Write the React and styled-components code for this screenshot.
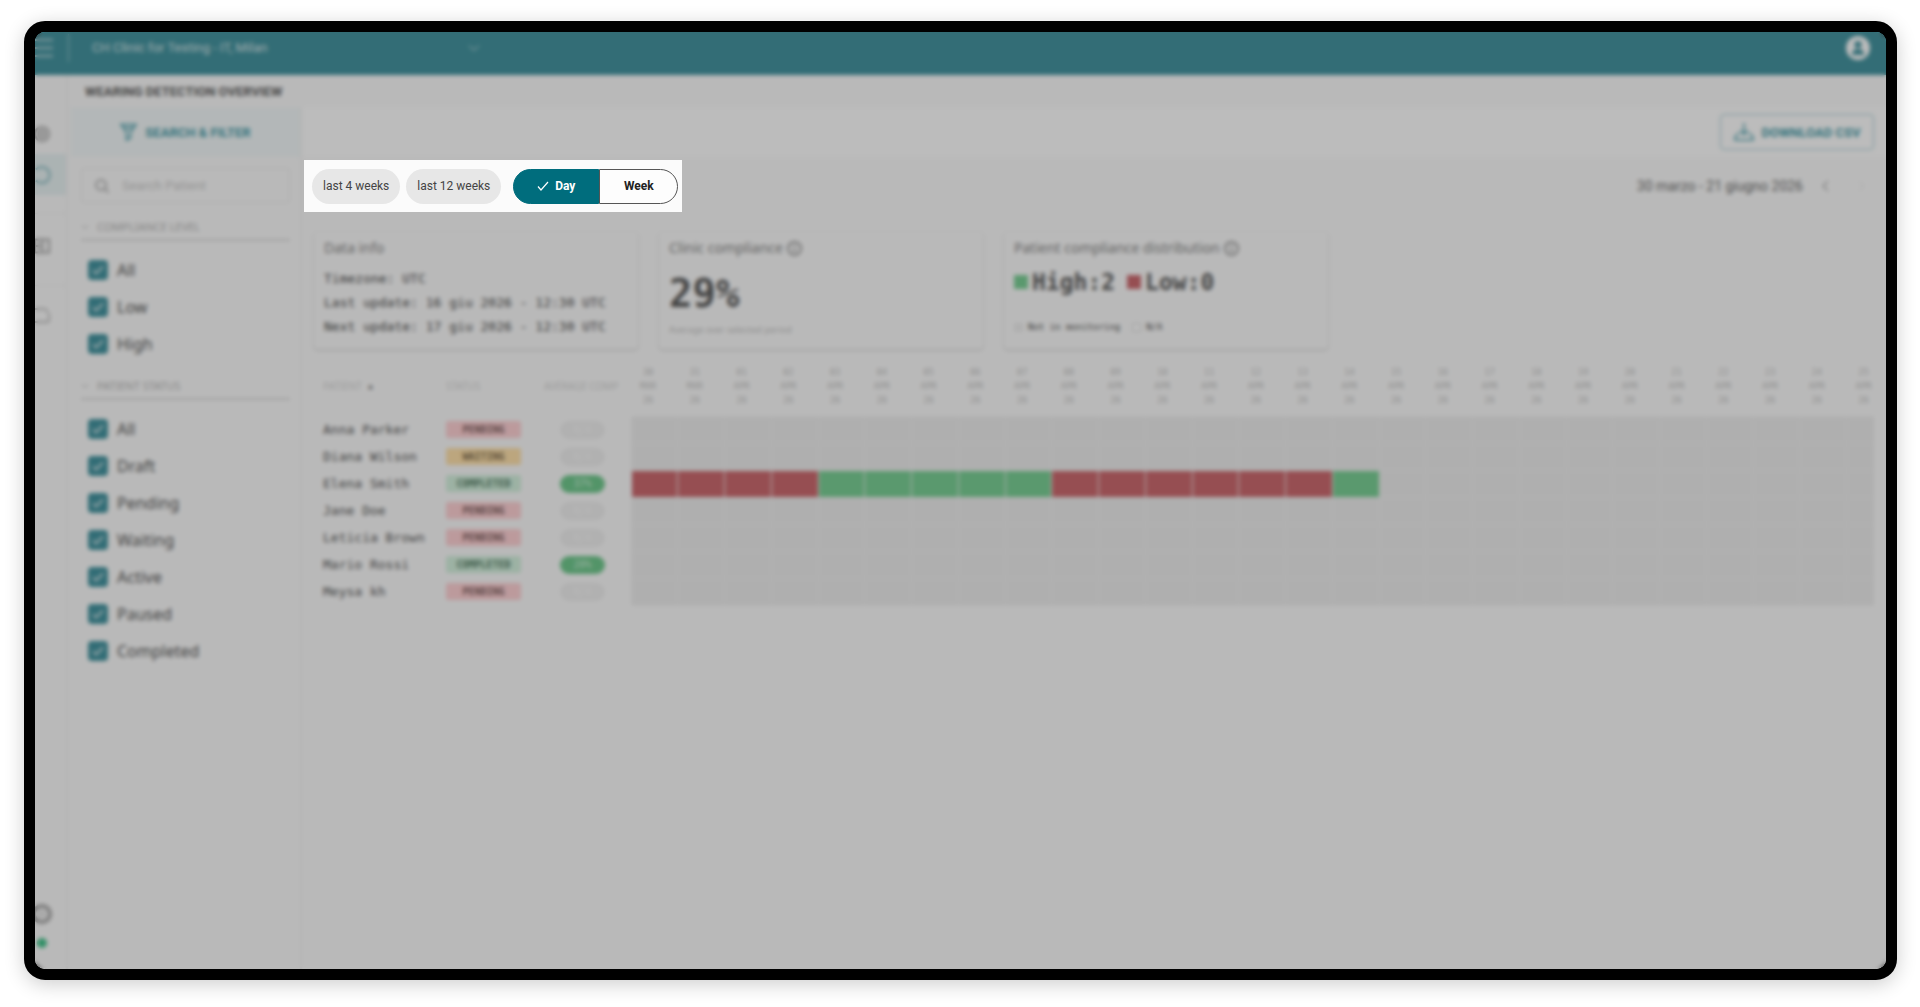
import React from "react";
import styled, { createGlobalStyle, css } from "styled-components";

const SANS = `Roboto, "Liberation Sans", sans-serif`;
const LABEL = `"Noto Sans", "Open Sans", sans-serif`;
const MONO = `"DejaVu Sans Mono", "Liberation Mono", monospace`;

const LEVELS = ["All", "Low", "High"];
const STATUSES = ["All", "Draft", "Pending", "Waiting", "Active", "Paused", "Completed"];

const ELENA = "LLLLHHHHHLLLLLLH";

const PATIENTS = [
  { name: "Anna Parker", status: "PENDING", rate: "N/A", days: "" },
  { name: "Diana Wilson", status: "WAITING", rate: "N/A", days: "" },
  { name: "Elena Smith", status: "COMPLETED", rate: "37%", days: ELENA },
  { name: "Jane Doe", status: "PENDING", rate: "N/A", days: "" },
  { name: "Leticia Brown", status: "PENDING", rate: "N/A", days: "" },
  { name: "Mario Rossi", status: "COMPLETED", rate: "20%", days: "" },
  { name: "Meysa kh", status: "PENDING", rate: "N/A", days: "" },
];

// 30 MAR, 31 MAR, 01 APR ... 25 APR
const DAYS = Array.from({ length: 27 }, (_, i) =>
  i < 2
    ? { day: String(30 + i), month: "MAR" }
    : { day: String(i - 1).padStart(2, "0"), month: "APR" }
);

function CheckRow({ name, label }) {
  return (
    <CheckLabel>
      <CheckBoxWrap>
        <CheckInput type="checkbox" name={name} defaultChecked />
        <svg width="14" height="14" viewBox="0 0 14 14" fill="none" stroke="#fff" strokeWidth="1.4">
          <path d="M2 7.5l3.2 3L12 3.5" />
        </svg>
      </CheckBoxWrap>
      {label}
    </CheckLabel>
  );
}

function FilterGroup({ title, name, options }) {
  return (
    <Group>
      <GroupTitle>
        <svg width="8" height="8" viewBox="0 0 8 8" fill="none" stroke="currentColor">
          <path d="M1 2.5l3 3 3-3" />
        </svg>
        {title}
      </GroupTitle>
      <GroupList>
        {options.map((o) => (
          <CheckRow key={o} name={name} label={o} />
        ))}
      </GroupList>
    </Group>
  );
}

function InfoIcon() {
  return (
    <svg width="15" height="15" viewBox="0 0 15 15" fill="none" stroke="currentColor" strokeWidth="1.5">
      <circle cx="7.5" cy="7.5" r="6.5" />
      <path d="M7.5 6.5v4.5M7.5 3.8v1.4" />
    </svg>
  );
}

export default function App() {
  return (
    <>
      <GlobalStyle />
      <Page>
        <Frame>
          <TopBar>
            <MenuButton aria-label="Menu">
              <svg width="18" height="20" viewBox="0 0 18 20" stroke="currentColor" strokeWidth="2">
                <path d="M0 2h18M0 10h18M0 18h18" />
              </svg>
            </MenuButton>
            <ClinicField>
              <ClinicSelect aria-label="Clinic" defaultValue="milan">
                <option value="milan">CH Clinic for Testing - IT, Milan</option>
              </ClinicSelect>
              <svg width="12" height="8" viewBox="0 0 12 8" fill="none" stroke="currentColor" strokeWidth="1">
                <path d="M1 1.5l5 5 5-5" />
              </svg>
            </ClinicField>
            <AvatarButton aria-label="Account">
              <svg width="24" height="24" viewBox="0 0 24 24">
                <circle cx="12" cy="12" r="12" fill="#fff" />
                <circle cx="12" cy="8.5" r="3.6" fill="#006d7d" />
                <path d="M6 19c0-4.5 2.5-6 6-6s6 1.5 6 6z" fill="#006d7d" />
              </svg>
            </AvatarButton>
          </TopBar>

          <Body>
            <Rail>
              <RailTop>
                <RailButton aria-label="Patients">
                  <svg width="18" height="18" viewBox="0 0 18 18" fill="none" stroke="currentColor" strokeWidth="2">
                    <circle cx="9" cy="9" r="7" />
                    <circle cx="9" cy="9" r="3" />
                  </svg>
                </RailButton>
                <RailButton aria-label="Wearing detection" $active>
                  <svg width="18" height="18" viewBox="0 0 18 18" fill="none" stroke="currentColor" strokeWidth="2">
                    <path d="M3 3.5A8 8 0 1 1 3 14.5" />
                  </svg>
                </RailButton>
              </RailTop>
              <RailGroup>
                <RailButton aria-label="Reports">
                  <svg width="18" height="18" viewBox="0 0 18 18" fill="none" stroke="currentColor" strokeWidth="2">
                    <path d="M2 2.5h14v13H2zM9 2.5v13M2 9h7" />
                  </svg>
                </RailButton>
              </RailGroup>
              <RailGroup>
                <RailButton aria-label="Help" $faint>
                  <svg width="18" height="18" viewBox="0 0 18 18" fill="none" stroke="currentColor" strokeWidth="1.8">
                    <path d="M2 3h8M16 7v7a2 2 0 0 1-2 2H2M11 2l4 4" />
                  </svg>
                </RailButton>
              </RailGroup>
              <RailBottom>
                <RailIconOnly aria-label="Settings">
                  <svg width="22" height="22" viewBox="0 0 22 22" fill="none" stroke="currentColor">
                    <circle cx="11" cy="11" r="8" strokeWidth="4" />
                    <circle cx="11" cy="11" r="2" strokeWidth="1" />
                  </svg>
                </RailIconOnly>
                <OnlineDot />
              </RailBottom>
            </Rail>

            <Content>
              <PageTitle>WEARING DETECTION OVERVIEW</PageTitle>
              <Columns>
                <Sidebar>
                  <FilterToggle>
                    <svg width="17" height="18" viewBox="0 0 17 18" fill="none" stroke="currentColor" strokeWidth="1.5">
                      <path d="M1 1.5h15L10.5 9v6l-4 2V9zM4 5h9" />
                    </svg>
                    SEARCH &amp; FILTER
                  </FilterToggle>
                  <SearchBox>
                    <svg width="16" height="16" viewBox="0 0 16 16" fill="none" stroke="currentColor" strokeWidth="2">
                      <circle cx="7" cy="7" r="5" />
                      <path d="M10.5 10.5l4 4" />
                    </svg>
                    <SearchInput type="text" placeholder="Search Patient" aria-label="Search Patient" />
                  </SearchBox>
                  <FilterGroup title="COMPLIANCE LEVEL" name="level" options={LEVELS} />
                  <FilterGroup title="PATIENT STATUS" name="status" options={STATUSES} />
                </Sidebar>

                <Main>
                  <ActionBar>
                    <DownloadButton>
                      <svg width="20" height="18" viewBox="0 0 20 18" fill="none" stroke="currentColor" strokeWidth="1.5">
                        <path d="M10 0v11M6 7.5l4 4 4-4M5 10l-4 4v3h18v-3l-4-4" />
                      </svg>
                      DOWNLOAD CSV
                    </DownloadButton>
                  </ActionBar>

                  <RangeRow>
                    <Spotlight>
                      <Chip>last 4 weeks</Chip>
                      <Chip>last 12 weeks</Chip>
                      <Toggle>
                        <ToggleButton $on aria-pressed="true">
                          <svg width="12" height="10" viewBox="0 0 12 10" fill="none" stroke="currentColor" strokeWidth="1.2">
                            <path d="M1 5.5l3 3.5 7-8" />
                          </svg>
                          Day
                        </ToggleButton>
                        <ToggleButton aria-pressed="false">Week</ToggleButton>
                      </Toggle>
                    </Spotlight>
                    <Period>
                      <span>30 marzo - 21 giugno 2026</span>
                      <PeriodButton aria-label="Previous period">
                        <svg width="7" height="12" viewBox="0 0 7 12" fill="none" stroke="currentColor" strokeWidth="1">
                          <path d="M6 1L1 6l5 5" />
                        </svg>
                      </PeriodButton>
                      <PeriodButton aria-label="Next period" disabled>
                        <svg width="7" height="12" viewBox="0 0 7 12" fill="none" stroke="currentColor" strokeWidth="1">
                          <path d="M1 1l5 5-5 5" />
                        </svg>
                      </PeriodButton>
                    </Period>
                  </RangeRow>

                  <Cards>
                    <Card>
                      <CardTitle>Data info</CardTitle>
                      <InfoLines>
                        <p>Timezone: UTC</p>
                        <p>Last update: 16 giu 2026 - 12:30 UTC</p>
                        <p>Next update: 17 giu 2026 - 12:30 UTC</p>
                      </InfoLines>
                    </Card>
                    <Card>
                      <CardTitle>
                        Clinic compliance <InfoIcon />
                      </CardTitle>
                      <BigNumber>29%</BigNumber>
                      <CardHint>Average over selected period</CardHint>
                    </Card>
                    <Card>
                      <CardTitle>
                        Patient compliance distribution <InfoIcon />
                      </CardTitle>
                      <Split>
                        <SplitItem>
                          <Swatch $color="#49be6e" />
                          High:2
                        </SplitItem>
                        <SplitItem>
                          <Swatch $color="#b9333a" />
                          Low:0
                        </SplitItem>
                      </Split>
                      <Legend>
                        <LegendItem>
                          <LegendBox />
                          Not in monitoring
                        </LegendItem>
                        <LegendItem>
                          <LegendBox $outlined />
                          N/A
                        </LegendItem>
                      </Legend>
                    </Card>
                  </Cards>

                  <TableScroll>
                    <Table>
                      <colgroup>
                        <Col $w={123} />
                        <Col $w={98} />
                        <Col $w={87} />
                        {DAYS.map((d) => (
                          <col key={d.day + d.month} />
                        ))}
                      </colgroup>
                      <thead>
                        <tr>
                          <HeadCell>
                            PATIENT <SortMark>▲</SortMark>
                          </HeadCell>
                          <HeadCell>STATUS</HeadCell>
                          <HeadCell>AVERAGE COMP</HeadCell>
                          {DAYS.map((d) => (
                            <DayHead key={d.day + d.month}>
                              <DayLabel>
                                <span>{d.day}</span>
                                <span>{d.month}</span>
                                <span>26</span>
                              </DayLabel>
                            </DayHead>
                          ))}
                        </tr>
                      </thead>
                      <tbody>
                        {PATIENTS.map((p) => (
                          <tr key={p.name}>
                            <NameCell>{p.name}</NameCell>
                            <td>
                              <Badge $status={p.status}>{p.status}</Badge>
                            </td>
                            <td>
                              <Rate $empty={p.rate === "N/A"}>{p.rate}</Rate>
                            </td>
                            {DAYS.map((d, i) => (
                              <DayCell key={d.day + d.month} $level={p.days[i]} />
                            ))}
                          </tr>
                        ))}
                      </tbody>
                    </Table>
                  </TableScroll>
                </Main>
              </Columns>
            </Content>
          </Body>
          <Veil />
        </Frame>
      </Page>
    </>
  );
}

const GlobalStyle = createGlobalStyle`
  * { box-sizing: border-box; }
  body {
    margin: 0;
    background: #fff;
    font-family: ${SANS};
    color: #222;
  }
  p { margin: 0; }
  button, input, select { font: inherit; color: inherit; }
  button {
    padding: 0;
    border: none;
    background: none;
    cursor: pointer;
  }
  svg { display: block; flex-shrink: 0; }
`;

const Page = styled.div`
  display: flex;
  min-height: 100vh;
  padding: 21px 23px 27px 24px;
`;

const Frame = styled.div`
  position: relative;
  flex: 1;
  min-width: 0;
  display: flex;
  flex-direction: column;
  overflow: hidden;
  border: 11px solid #000;
  border-radius: 21px;
  background: #fafafa;
  box-shadow: 0 4px 20px rgba(0, 0, 0, 0.2);
`;

/* dims and blurs the whole app, only Spotlight sits above it */
const Veil = styled.div`
  position: absolute;
  inset: 0;
  z-index: 1;
  background: rgba(110, 110, 110, 0.464);
  backdrop-filter: blur(2px);
  pointer-events: none;
`;

const TopBar = styled.header`
  display: flex;
  align-items: center;
  height: 43px;
  padding: 0 16px 12px 0;
  background: #006d7d;
  color: rgba(255, 255, 255, 0.8);
`;

const MenuButton = styled.button`
  width: 34px;
  height: 28px;
  border-right: 1px solid rgba(255, 255, 255, 0.5);
  color: rgba(255, 255, 255, 0.6);
`;

const ClinicField = styled.div`
  display: flex;
  align-items: center;
  width: 388px;
  margin-left: 23px;
`;

const ClinicSelect = styled.select`
  flex: 1;
  appearance: none;
  border: none;
  padding: 0;
  background: none;
  font-size: 13px;
`;

const AvatarButton = styled.button`
  margin-left: auto;
`;

const Body = styled.div`
  flex: 1;
  display: flex;
`;

const Rail = styled.nav`
  display: flex;
  flex-direction: column;
  width: 33px;
  border-right: 2px solid #efefef;
  color: #8a8a8a;
`;

const RailTop = styled.div`
  padding: 38px 0 18px;
`;

const RailGroup = styled.div`
  padding: 11px 0 19px;
  border-top: 1px solid #e8e8e8;
  & + & { padding-top: 8px; }
`;

const railIcon = css`
  display: flex;
  align-items: center;
  justify-content: center;
  width: 100%;
  padding-right: 18px;
`;

const RailButton = styled.button`
  ${railIcon}
  height: 41px;
  color: ${({ $active, $faint }) => ($active ? "#5aa3ac" : $faint ? "#a5a5a5" : "inherit")};
  background: ${({ $active }) => ($active ? "#e0eeef" : "none")};
`;

const RailBottom = styled.div`
  display: flex;
  flex-direction: column;
  gap: 13px;
  margin-top: auto;
  padding-bottom: 21px;
`;

const RailIconOnly = styled.button`
  ${railIcon}
`;

const OnlineDot = styled.span`
  width: 10px;
  height: 10px;
  margin-left: 2px;
  border-radius: 50%;
  background: #00ad62;
`;

const Content = styled.div`
  flex: 1;
  min-width: 0;
  display: flex;
  flex-direction: column;
`;

const PageTitle = styled.h1`
  margin: 0;
  padding: 2px 17px 0;
  font-size: 13px;
  line-height: 30px;
  font-weight: 700;
`;

const Columns = styled.div`
  flex: 1;
  display: flex;
`;

const Sidebar = styled.aside`
  width: 234px;
  padding: 0 10px 0 13px;
  border-right: 2px solid #efefef;
`;

const FilterToggle = styled.button`
  display: flex;
  align-items: center;
  justify-content: center;
  gap: 8px;
  width: calc(100% + 20px);
  height: 50px;
  margin: 0 -10px 11px;
  background: #eff6f7;
  color: #00798a;
  font-size: 13px;
  font-weight: 700;
`;

const SearchBox = styled.div`
  display: flex;
  align-items: center;
  gap: 12px;
  height: 35px;
  padding: 0 12px;
  border: 1px solid #dcdcdc;
  border-radius: 3px;
  color: #999;
`;

const SearchInput = styled.input`
  flex: 1;
  min-width: 0;
  border: none;
  outline: none;
  padding: 0;
  background: none;
  font-size: 13px;
  &::placeholder { color: #b5b5b5; }
`;

const Group = styled.section`
  padding-top: 12px;
`;

const GroupTitle = styled.h2`
  display: flex;
  align-items: center;
  gap: 8px;
  margin: 0;
  height: 26px;
  border-bottom: 2px solid #cfcfcf;
  color: #999;
  font: 400 11px/24px ${LABEL};
`;

const GroupList = styled.div`
  padding: 10px 7px 0;
`;

const CheckLabel = styled.label`
  display: flex;
  align-items: center;
  gap: 9px;
  height: 37px;
  color: #111;
  font: 400 16px/20px ${LABEL};
`;

const CheckBoxWrap = styled.span`
  display: grid;
  place-items: center;
  & > * { grid-area: 1 / 1; }
  svg { pointer-events: none; }
`;

const CheckInput = styled.input`
  appearance: none;
  width: 20px;
  height: 20px;
  margin: 0;
  border-radius: 4px;
  border: 2px solid #006d7d;
  &:checked { background: #006d7d; }
`;

const Main = styled.main`
  flex: 1;
  min-width: 0;
`;

const ActionBar = styled.div`
  display: flex;
  align-items: center;
  justify-content: flex-end;
  height: 50px;
  padding: 0 12px;
  background: #fff;
`;

const DownloadButton = styled.button`
  display: flex;
  align-items: center;
  justify-content: center;
  gap: 8px;
  width: 154px;
  height: 36px;
  border: 1px solid #7fb8c0;
  border-radius: 4px;
  color: #00798a;
  font-size: 13px;
  font-weight: 700;
`;

const RangeRow = styled.div`
  display: flex;
  align-items: center;
  justify-content: space-between;
  padding: 3px 7px 0 2px;
`;

const Spotlight = styled.div`
  position: relative;
  z-index: 2;
  display: flex;
  align-items: center;
  gap: 6px;
  height: 52px;
  padding: 0 4px 0 8px;
  background: #fbfbfb;
`;

const Chip = styled.button`
  height: 35px;
  padding: 0 11px;
  border-radius: 18px;
  background: #e7e7e7;
  color: #444;
  font-size: 12px;
`;

const Toggle = styled.div`
  display: flex;
  margin-left: 6px;
`;

const ToggleButton = styled.button`
  display: flex;
  align-items: center;
  justify-content: center;
  gap: 6px;
  width: ${({ $on }) => ($on ? 86 : 79)}px;
  height: 35px;
  border: 1px solid ${({ $on }) => ($on ? "#006d7d" : "#555")};
  border-radius: ${({ $on }) => ($on ? "18px 0 0 18px" : "0 18px 18px 0")};
  background: ${({ $on }) => ($on ? "#006d7d" : "#fdfdfd")};
  color: ${({ $on }) => ($on ? "#fff" : "#222")};
  font-size: 12px;
  font-weight: 700;
`;

const Period = styled.div`
  display: flex;
  align-items: center;
  color: #333;
  font-size: 14px;
`;

const PeriodButton = styled.button`
  display: flex;
  justify-content: center;
  width: 36px;
  padding: 8px 0;
  margin-left: 4px;
  & + & { margin-left: 0; }
  &:disabled { color: #d5d5d5; }
`;

const Cards = styled.div`
  display: flex;
  gap: 21px;
  padding: 20px 12px 0;
`;

const Card = styled.section`
  display: flex;
  flex-direction: column;
  width: 324px;
  height: 117px;
  padding: 4px 10px 8px;
  border-radius: 4px;
  background: #fafafa;
  box-shadow: 0 1px 3px rgba(0, 0, 0, 0.25);
`;

const CardTitle = styled.h3`
  display: flex;
  align-items: center;
  gap: 4px;
  margin: 0;
  color: #555;
  font: 400 14px/24px ${LABEL};
`;

const InfoLines = styled.div`
  padding-top: 7px;
  color: #000;
  font: 400 13px/24px ${MONO};
`;

const BigNumber = styled.p`
  padding-top: 14px;
  font: 700 39px/40px ${MONO};
`;

const CardHint = styled.p`
  margin: auto 0 3px;
  color: #aaa;
  font: 400 9px/16px ${LABEL};
`;

const Split = styled.div`
  display: flex;
  gap: 12px;
  padding-top: 6px;
`;

const SplitItem = styled.div`
  display: flex;
  align-items: center;
  gap: 4px;
  font: 700 23px/32px ${MONO};
`;

const Swatch = styled.span`
  width: 14px;
  height: 14px;
  background: ${({ $color }) => $color};
`;

const Legend = styled.div`
  display: flex;
  gap: 12px;
  margin: auto 0 5px;
`;

const LegendItem = styled.div`
  display: flex;
  align-items: center;
  gap: 5px;
  color: #000;
  font: 400 9px/18px ${MONO};
`;

const LegendBox = styled.span`
  width: 9px;
  height: 9px;
  border: 1px solid ${({ $outlined }) => ($outlined ? "#ccc" : "#e4e4e4")};
  background: ${({ $outlined }) => ($outlined ? "#fff" : "#e9e9e9")};
`;

const TableScroll = styled.div`
  margin: 12px 12px 0 21px;
  overflow: hidden;
`;

const Table = styled.table`
  width: calc(100% + 20px);
  table-layout: fixed;
  border-collapse: collapse;
  td { padding: 0; height: 27px; }
`;

const Col = styled.col`
  width: ${({ $w }) => $w}px;
`;

const HeadCell = styled.th`
  height: 55px;
  padding: 0 0 6px;
  text-align: left;
  white-space: nowrap;
  color: #c4c4c4;
  font: 400 10px/14px ${LABEL};
`;

const SortMark = styled.span`
  margin-left: 2px;
  color: #444;
  font-size: 8px;
  vertical-align: text-top;
`;

const DayHead = styled.th`
  height: 55px;
  padding: 0 0 4px 9px;
  text-align: left;
  color: #aaa;
  font: 400 9px/14px ${MONO};
`;

const DayLabel = styled.div`
  display: inline-flex;
  flex-direction: column;
  align-items: center;
`;

const NameCell = styled.td`
  white-space: nowrap;
  color: #111;
  font: 400 13px/20px ${MONO};
`;

const BADGES = {
  PENDING: { bg: "#ffc0c4", fg: "#4a1f21" },
  WAITING: { bg: "#ffd68c", fg: "#4a3008" },
  COMPLETED: { bg: "#c4ecd2", fg: "#104a2a" },
};

const Badge = styled.span`
  display: block;
  width: 75px;
  border-radius: 2px;
  background: ${({ $status }) => BADGES[$status].bg};
  color: ${({ $status }) => BADGES[$status].fg};
  text-align: center;
  font: 700 10px/17px ${MONO};
`;

const Rate = styled.span`
  display: block;
  width: 45px;
  margin-left: 16px;
  border-radius: 9px;
  background: ${({ $empty }) => ($empty ? "#eaeaea" : "#3cb564")};
  color: ${({ $empty }) => ($empty ? "#f8f8f8" : "#c8f0d4")};
  text-align: center;
  font: 400 10px/18px ${MONO};
`;

const LEVEL_COLORS = { L: "#b9333a", H: "#49be6e" };

const DayCell = styled.td`
  border: 1px solid #f0f0f0;
  background: ${({ $level }) => LEVEL_COLORS[$level] || "#e7e7e7"};
`;
